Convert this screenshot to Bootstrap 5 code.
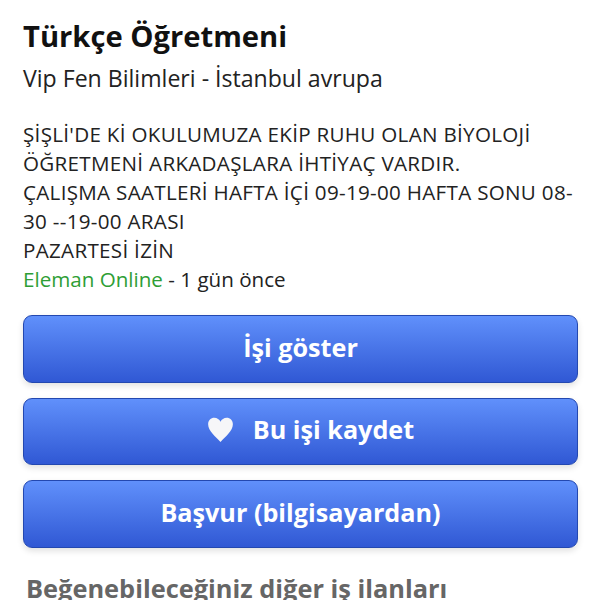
<!DOCTYPE html>
<html lang="tr">
<head>
  <meta charset="UTF-8">
  <title>Türkçe Öğretmeni</title>
  <link href="https://cdn.jsdelivr.net/npm/bootstrap@5.3.3/dist/css/bootstrap.min.css" rel="stylesheet">
  <style>
    html, body { height: 600px; overflow: hidden; }
    body { font-family: "Open Sans", "Noto Sans", sans-serif; color: #222; background: #fff; }
    .page-wrap { padding: 17px 22px 0 23px; }
    .job-title { font-size: 29.2px; line-height: 38px; font-weight: 700; color: #111; margin: 0; }
    .job-company { font-size: 23.1px; line-height: 30px; margin: 8px 0 0; }
    .job-desc { font-size: 20.6px; line-height: 29px; margin: 27px 0 0; white-space: nowrap; }
    .job-caps { letter-spacing: .3px; }
    .job-online { color: #2e9e35; }
    .btn-stack { margin-top: 21px; gap: 15px; }
    .btn-job {
      height: 67.5px; padding-bottom: 8px; font-size: 25.2px; font-weight: 700; color: #fff;
      background: linear-gradient(#6090fb, #3058d4);
      border: 1px solid #2348b0; border-radius: 9px;
      box-shadow: 0 3px 6px rgba(0, 0, 0, .12);
    }
    .btn-job:hover { color: #fff; }
    .btn-save { padding-left: 32px; gap: 19px; }
    .heart-icon { width: 27px; height: 27px; fill: #f6f6f8; margin-top: -2px; }
    .more-title { font-size: 25.4px; line-height: 32px; font-weight: 700; color: #666; margin: 24px 0 0 3px; }
  </style>
</head>
<body>
  <div class="page-wrap">
    <h1 class="job-title">Türkçe Öğretmeni</h1>
    <p class="job-company">Vip Fen Bilimleri - İstanbul avrupa</p>
    <p class="job-desc"><span class="job-caps">ŞİŞLİ'DE Kİ OKULUMUZA EKİP RUHU OLAN BİYOLOJİ<br>ÖĞRETMENİ ARKADAŞLARA İHTİYAÇ VARDIR.<br>ÇALIŞMA SAATLERİ HAFTA İÇİ 09-19-00 HAFTA SONU 08-<br>30 --19-00 ARASI<br>PAZARTESİ İZİN</span><br><span class="job-online">Eleman Online</span> - 1 gün önce</p>

    <div class="d-flex flex-column btn-stack">
      <button type="button" class="btn btn-job d-flex align-items-center justify-content-center">İşi göster</button>
      <button type="button" class="btn btn-job btn-save d-flex align-items-center justify-content-center">
        <svg class="heart-icon" viewBox="0 0 24 24"><path d="M12 23C8 18.500 1 13.500 1 7.300 1 3.800 3.500 1.500 6.500 1.500 9 1.500 11 3 12 5 13 3 15 1.500 17.500 1.500 20.500 1.500 23 3.800 23 7.300 23 13.500 16 18.500 12 23Z"/></svg>
        <span>Bu işi kaydet</span>
      </button>
      <button type="button" class="btn btn-job d-flex align-items-center justify-content-center">Başvur (bilgisayardan)</button>
    </div>

    <h2 class="more-title">Beğenebileceğiniz diğer iş ilanları</h2>
  </div>
</body>
</html>
